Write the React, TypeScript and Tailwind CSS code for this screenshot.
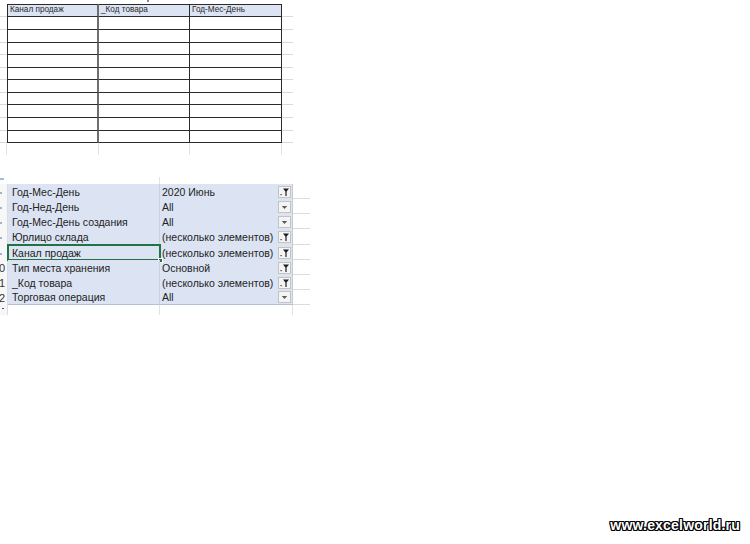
import React from "react";

const topRows = [13, 13, 12, 13, 12, 13, 12, 13, 13, 12];

const pivotRows = [
  { label: "Год-Мес-День", value: "2020 Июнь", filtered: true, num: "", h: 15 },
  { label: "Год-Нед-День", value: "All", filtered: false, num: "", h: 15 },
  { label: "Год-Мес-День создания", value: "All", filtered: false, num: "", h: 15 },
  { label: "Юрлицо склада", value: "(несколько элементов)", filtered: true, num: "", h: 16 },
  { label: "Канал продаж", value: "(несколько элементов)", filtered: true, num: "", h: 15, selected: true },
  { label: "Тип места хранения", value: "Основной", filtered: true, num: "0", h: 15 },
  { label: "_Код товара", value: "(несколько элементов)", filtered: true, num: "1", h: 15 },
  { label: "Торговая операция", value: "All", filtered: false, num: "2", h: 15 },
];

function FilterIcon() {
  return (
    <svg width="11" height="10" viewBox="0 0 11 10">
      <path d="M4 1.5h6L7.6 4.6V9H6.4V4.6Z" fill="#1f1f1f" />
      <path d="M0.8 7.2h2.6L2.1 8.6Z" fill="#444" />
    </svg>
  );
}

function DropIcon() {
  return (
    <svg width="11" height="10" viewBox="0 0 11 10">
      <path d="M2.8 4h5.4L5.5 7Z" fill="#5a5a5a" />
    </svg>
  );
}

function TopRow({ h, header }: { h: number; header?: boolean }) {
  const cell = header
    ? "bg-[#dce4f4] border-t border-[#2b2b2b] flex items-center pl-[2px] text-[8.2px] text-[#2a2a2a] whitespace-nowrap"
    : "bg-white";
  return (
    <div className="flex" style={{ height: h }}>
      <div className="w-[7px] border-b border-[#d9d9d9]" />
      <div className={`w-[92px] border-l border-r-2 border-b border-l-[#2b2b2b] border-r-[#6e6e6e] border-b-[#2b2b2b] ${cell}`}>
        {header && "Канал продаж"}
      </div>
      <div className={`w-[91px] border-r border-b border-[#2b2b2b] ${cell}`}>
        {header && "_Код товара"}
      </div>
      <div className={`w-[92px] border-r border-b border-[#2b2b2b] ${cell}`}>
        {header && "Год-Мес-День"}
      </div>
      <div className="w-[11px] border-b border-[#d9d9d9]" />
    </div>
  );
}

export default function App() {
  return (
    <div className="w-[750px] h-[544px] bg-white overflow-hidden flex flex-col font-['Liberation_Sans',Arial,sans-serif]">
      <div className="h-[4px] flex">
        <div className="w-[147px]" />
        <div className="w-[2px] h-[2px] bg-[#888]" />
      </div>
      <TopRow h={13} header />
      {topRows.map((h, i) => (
        <TopRow key={i} h={h} />
      ))}
      <div className="flex h-[12px]">
        <div className="w-[7px] border-r border-[#e2e2e2]" />
        <div className="w-[92px] border-r border-[#e2e2e2]" />
        <div className="w-[91px] border-r border-[#e2e2e2]" />
        <div className="w-[92px] border-r border-[#e2e2e2]" />
      </div>

      <div className="h-[22px]" />
      <div className="flex h-[7px]">
        <div className="w-[8px] flex items-start">
          <div className="w-[4px] h-[2px] bg-[#a9bcd8] mt-[1px]" />
        </div>
        <div className="w-[152px] border-r border-[#e2e2e2]" />
      </div>

      <div className="flex flex-col w-[310px]">
        {pivotRows.map((r, i) => (
          <div key={i} className="flex" style={{ height: r.h }}>
            <div className="w-[8px] bg-[#f7f7f7] border-r border-[#dcdcdc] flex items-center justify-end overflow-hidden pt-[2px]">
              {r.num ? (
                <span className="text-[11px] leading-none text-[#333] mr-[2px]">{r.num}</span>
              ) : (
                <div className="w-[2px] h-[2px] bg-[#9fb3d1] mr-[5px]" />
              )}
            </div>
            <div className={`w-[152px] bg-[#dce4f4] border-r border-[#c9d1e2] relative flex items-center pl-[4px] pt-[2px] text-[10.5px] text-[#222] whitespace-nowrap ${i === pivotRows.length - 1 ? "border-b border-b-[#b4c0d8]" : ""}`}>
              {r.label}
              {r.selected && (
                <div className="absolute -left-[1px] -top-[1px] w-[154px] bottom-[-1px] border-2 border-[#217346]">
                  <div className="absolute -right-[4px] -bottom-[4px] w-[5px] h-[5px] bg-[#217346] border border-white" />
                </div>
              )}
            </div>
            <div className={`w-[133px] bg-[#dce4f4] border-r border-[#c9c9c9] flex items-center text-[10.5px] text-[#222] whitespace-nowrap ${i === pivotRows.length - 1 ? "border-b border-b-[#b4c0d8]" : ""}`}>
              <span className="pl-[2px] pt-[2px] flex-1">{r.value}</span>
              <div className="w-[13px] h-[12px] mr-[1px] bg-[#f4f4f4] border border-[#c3c3c3] flex items-center justify-center">
                {r.filtered ? <FilterIcon /> : <DropIcon />}
              </div>
            </div>
            <div className="w-[17px] border-b border-[#dcdcdc]" />
          </div>
        ))}
        <div className="flex h-[10px]">
          <div className="w-[8px] bg-[#f7f7f7] border-r border-[#dcdcdc] flex items-start justify-end">
            <div className="w-[2px] h-[1px] bg-[#555] mr-[3px] mt-[3px]" />
          </div>
          <div className="w-[152px] border-r border-[#e2e2e2]" />
          <div className="w-[133px] border-r border-[#e2e2e2]" />
        </div>
      </div>

      <div className="flex-1 flex items-end justify-end pr-[10px] pb-[8px]">
        <span className="text-[14px] font-bold text-white tracking-[0.2px] [text-shadow:1px_0_0_#000,-1px_0_0_#000,0_1px_0_#000,0_-1px_0_#000,1px_1px_0_#000,-1px_-1px_0_#000,1px_-1px_0_#000,-1px_1px_0_#000]">
          www.excelworld.ru
        </span>
      </div>
    </div>
  );
}
